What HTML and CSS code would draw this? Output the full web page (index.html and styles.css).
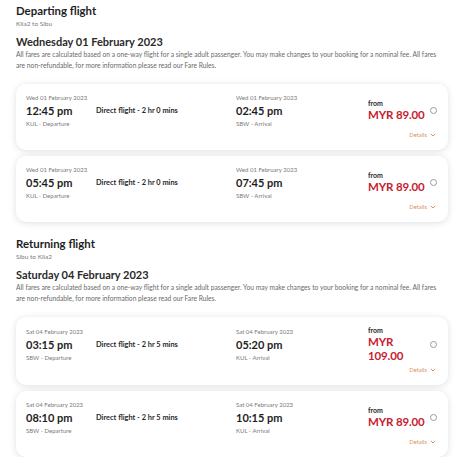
FILE: index.html
```html
<!DOCTYPE html>
<html lang="en">
<head>
<meta charset="utf-8">
<title>Flights</title>
<link rel="stylesheet" href="styles.css">
</head>
<body>
<main class="page">
  <section class="trip">
    <h1 class="trip-title">Departing flight</h1>
    <p class="trip-route">Klia2 to Sibu</p>
    <h2 class="trip-date">Wednesday 01 February 2023</h2>
    <p class="trip-note">All fares are calculated based on a one-way flight for a single adult passenger. You may make changes to your booking for a nominal fee. All fares are non-refundable, for more information please read our Fare Rules.</p>
    <div class="cards">
      <article class="card">
        <div class="card-row">
          <div class="leg">
            <div class="leg-date">Wed 01 February 2023</div>
            <div class="leg-time">12:45 pm</div>
            <div class="leg-port">KUL - Departure</div>
          </div>
          <div class="duration">Direct flight - 2 hr 0 mins</div>
          <div class="leg">
            <div class="leg-date">Wed 01 February 2023</div>
            <div class="leg-time">02:45 pm</div>
            <div class="leg-port">SBW - Arrival</div>
          </div>
          <div class="price">
            <div class="price-from">from</div>
            <div class="price-amount">MYR 89.00</div>
          </div>
          <span class="radio"></span>
        </div>
        <div class="details">Details <svg class="chev" viewBox="0 0 6 4" width="6" height="4"><path d="M0.8 0.8 L3 3 L5.2 0.8" fill="none" stroke="currentColor" stroke-width="1"/></svg></div>
      </article>
      <article class="card">
        <div class="card-row">
          <div class="leg">
            <div class="leg-date">Wed 01 February 2023</div>
            <div class="leg-time">05:45 pm</div>
            <div class="leg-port">KUL - Departure</div>
          </div>
          <div class="duration">Direct flight - 2 hr 0 mins</div>
          <div class="leg">
            <div class="leg-date">Wed 01 February 2023</div>
            <div class="leg-time">07:45 pm</div>
            <div class="leg-port">SBW - Arrival</div>
          </div>
          <div class="price">
            <div class="price-from">from</div>
            <div class="price-amount">MYR 89.00</div>
          </div>
          <span class="radio"></span>
        </div>
        <div class="details">Details <svg class="chev" viewBox="0 0 6 4" width="6" height="4"><path d="M0.8 0.8 L3 3 L5.2 0.8" fill="none" stroke="currentColor" stroke-width="1"/></svg></div>
      </article>
    </div>
  </section>

  <section class="trip trip-return">
    <h1 class="trip-title">Returning flight</h1>
    <p class="trip-route">Sibu to Klia2</p>
    <h2 class="trip-date">Saturday 04 February 2023</h2>
    <p class="trip-note">All fares are calculated based on a one-way flight for a single adult passenger. You may make changes to your booking for a nominal fee. All fares are non-refundable, for more information please read our Fare Rules.</p>
    <div class="cards">
      <article class="card">
        <div class="card-row">
          <div class="leg">
            <div class="leg-date">Sat 04 February 2023</div>
            <div class="leg-time">03:15 pm</div>
            <div class="leg-port">SBW - Departure</div>
          </div>
          <div class="duration">Direct flight - 2 hr 5 mins</div>
          <div class="leg">
            <div class="leg-date">Sat 04 February 2023</div>
            <div class="leg-time">05:20 pm</div>
            <div class="leg-port">KUL - Arrival</div>
          </div>
          <div class="price">
            <div class="price-from">from</div>
            <div class="price-amount">MYR 109.00</div>
          </div>
          <span class="radio"></span>
        </div>
        <div class="details">Details <svg class="chev" viewBox="0 0 6 4" width="6" height="4"><path d="M0.8 0.8 L3 3 L5.2 0.8" fill="none" stroke="currentColor" stroke-width="1"/></svg></div>
      </article>
      <article class="card">
        <div class="card-row">
          <div class="leg">
            <div class="leg-date">Sat 04 February 2023</div>
            <div class="leg-time">08:10 pm</div>
            <div class="leg-port">SBW - Departure</div>
          </div>
          <div class="duration">Direct flight - 2 hr 5 mins</div>
          <div class="leg">
            <div class="leg-date">Sat 04 February 2023</div>
            <div class="leg-time">10:15 pm</div>
            <div class="leg-port">KUL - Arrival</div>
          </div>
          <div class="price">
            <div class="price-from">from</div>
            <div class="price-amount">MYR 89.00</div>
          </div>
          <span class="radio"></span>
        </div>
        <div class="details">Details <svg class="chev" viewBox="0 0 6 4" width="6" height="4"><path d="M0.8 0.8 L3 3 L5.2 0.8" fill="none" stroke="currentColor" stroke-width="1"/></svg></div>
      </article>
    </div>
  </section>
</main>
</body>
</html>
```

FILE: styles.css
```css
* { box-sizing: border-box; }

html, body {
  margin: 0;
  padding: 0;
  background: #ffffff;
}

body {
  font-family: Lato, "Liberation Sans", sans-serif;
  color: #222222;
}

.page {
  padding: 3px 16px 0 16px;
  width: 458px;
}

.trip-title {
  margin: 0;
  font-size: 11.4px;
  font-weight: 700;
  line-height: 16px;
  color: #1e1e1e;
}

.trip-route {
  margin: 0;
  font-size: 6.5px;
  line-height: 10px;
  color: #7a7a7a;
}

.trip-date {
  margin: 6px 0 0 0;
  font-size: 11px;
  font-weight: 700;
  line-height: 14px;
  color: #2a2a2a;
}

.trip-note {
  margin: 0;
  font-size: 6.7px;
  line-height: 11px;
  color: #6a6a6a;
}

.cards {
  margin-top: 13px;
  display: flex;
  flex-direction: column;
  gap: 6px;
  width: 432px;
}

.trip-return {
  margin-top: 14px;
}

.card {
  background: #ffffff;
  border-radius: 10px;
  box-shadow: 0 1px 7px rgba(0, 0, 0, 0.13);
  padding: 9px 11px 10px 10px;
}

.card-row {
  display: grid;
  grid-template-columns: 70px 140px 132px 62px 7px;
  align-items: center;
}

.leg-date {
  font-size: 6px;
  line-height: 10px;
  color: #7a7a7a;
}

.leg-time {
  font-size: 11px;
  font-weight: 700;
  line-height: 16px;
  color: #1e1e1e;
}

.leg-port {
  font-size: 6px;
  line-height: 9px;
  color: #7a7a7a;
}

.duration {
  font-size: 7.4px;
  font-weight: 700;
  color: #2a2a2a;
}

.price-from {
  font-size: 7px;
  font-weight: 700;
  line-height: 9px;
  color: #2a2a2a;
}

.price-amount {
  font-size: 11.5px;
  font-weight: 700;
  line-height: 14px;
  letter-spacing: -0.15px;
  color: #c8202f;
}

.radio {
  width: 7px;
  height: 7px;
  border: 1px solid #9a9a9a;
  border-radius: 50%;
}

.details {
  margin-top: 2px;
  display: flex;
  justify-content: flex-end;
  align-items: center;
  gap: 3px;
  padding-right: 1px;
  font-size: 5.8px;
  line-height: 10px;
  color: #d8935e;
}

.chev {
  display: block;
}
```
